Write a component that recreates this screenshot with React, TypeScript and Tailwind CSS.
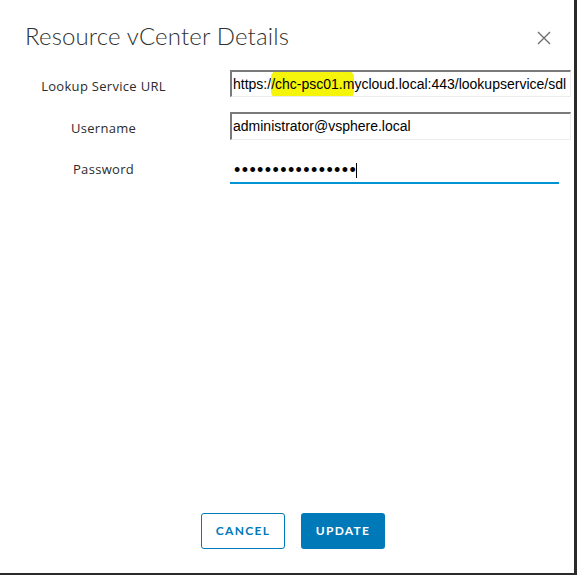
import React from "react";

export default function App() {
  const inputFont = { fontFamily: "'Liberation Sans', Arial, sans-serif" };
  const labelFont = { fontFamily: "'Open Sans', sans-serif" };
  return (
    <div className="w-[577px] h-[575px] bg-white border-r-[3px] border-b-2 border-[#2b2b2b] flex flex-col" style={{ fontFamily: "Lato, 'Open Sans', sans-serif" }}>
      <div className="flex items-start justify-between pl-[25px] pr-[23px] pt-[21px] h-[70px]">
        <h1 className="text-[24px] leading-[30px] font-light tracking-[0.15px] text-[#313131]">Resource vCenter Details</h1>
        <button className="mt-[10px] w-[14px] h-[14px] text-[#6f6f6f]" aria-label="Close">
          <svg viewBox="0 0 14 14" width="14" height="14" fill="none" stroke="currentColor" strokeWidth="1.4">
            <path d="M1 1 L13 13 M13 1 L1 13" />
          </svg>
        </button>
      </div>
      <div className="flex flex-col gap-[15px]">
        <div className="flex items-center h-[27px]">
          <label className="w-[207px] pt-[6px] text-center text-[13px] tracking-[0.3px] text-[#2c2c2c]" style={labelFont}>Lookup Service URL</label>
          <div className="ml-[23px] w-[341px] h-[27px] border-t-2 border-l-2 border-t-[#7a7a7a] border-l-[#7a7a7a] border-r border-b border-r-[#ececec] border-b-[#ececec] flex items-center pl-[1px] text-[14px] text-black whitespace-nowrap overflow-hidden" style={inputFont}>
            https:/<span className="bg-[#f5f50c] rounded-[6px] py-[3px]">/chc-psc01.m</span>ycloud.local:443/lookupservice/sdl
          </div>
        </div>
        <div className="flex items-center h-[28px]">
          <label className="w-[207px] pt-[5px] text-center text-[13px] tracking-[0.3px] text-[#2c2c2c]" style={labelFont}>Username</label>
          <div className="ml-[23px] w-[341px] h-[28px] border-t-2 border-l-2 border-t-[#7a7a7a] border-l-[#7a7a7a] border-r border-b border-r-[#ececec] border-b-[#ececec] flex items-center pl-[1px] text-[14px] text-black whitespace-nowrap" style={inputFont}>
            administrator@vsphere.local
          </div>
        </div>
        <div className="flex items-center h-[28px] mt-[1px]">
          <label className="w-[207px] text-center text-[13px] tracking-[0.3px] text-[#2c2c2c]" style={labelFont}>Password</label>
          <div className="ml-[23px] w-[329px] h-[28px] border-b-2 border-[#0094d2] flex items-center pl-[4px] pt-[2px]" style={inputFont}>
            <span className="text-[18px] leading-none tracking-[1.4px] text-black">••••••••••••••••</span>
            <span className="w-px h-[15px] bg-black ml-[-1px]" />
          </div>
        </div>
      </div>
      <div className="flex-1" />
      <div className="flex gap-4 pl-[201px] pb-[24px]">
        <button className="w-[84px] h-[36px] rounded-[3px] border border-[#0079b8] text-[#0079b8] text-[12px] font-bold tracking-[1.3px] bg-white">CANCEL</button>
        <button className="w-[84px] h-[36px] rounded-[3px] bg-[#0079b8] text-white text-[12px] font-bold tracking-[1.3px]">UPDATE</button>
      </div>
    </div>
  );
}
